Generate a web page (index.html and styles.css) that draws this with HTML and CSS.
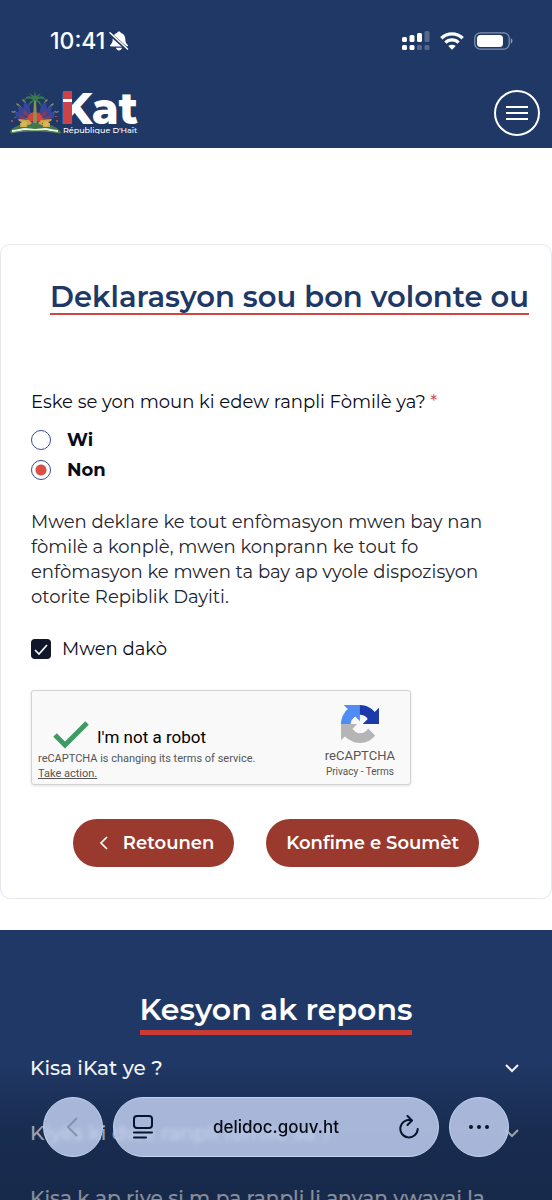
FILE: index.html
```html
<!DOCTYPE html>
<html lang="ht">
<head>
  <meta charset="UTF-8">
  <meta name="viewport" content="width=device-width, initial-scale=1.0">
  <title>iKat - Deklarasyon</title>
  <link rel="stylesheet" href="styles.css">
</head>
<body>
  <div class="screen">
    <header class="header">
      <div class="status-bar">
        <div class="status-left">
          <span class="time">10:41</span>
          <svg class="bell" viewBox="0 0 20 20" width="20" height="20">
            <path fill="#fff" d="M10 .5c1 0 1.800.7 2 1.600 2.700.8 4.300 3.100 4.300 5.900 0 3.600 1 4.700 2.500 6.100.5.500.2 1.500-.8 1.500H2c-1 0-1.300-1-.8-1.500C2.700 12.700 3.700 11.600 3.700 8c0-2.800 1.600-5.100 4.300-5.900C8.200 1.200 9 .5 10 .5zM7 16.800h6c-.2 1.500-1.500 2.600-3 2.600s-2.800-1.100-3-2.600z"/>
            <path stroke="#203866" stroke-width="3.500" d="M0 2l19 17"/>
            <path stroke="#fff" stroke-width="1.500" stroke-linecap="round" d="M1 1.800L18.500 18"/>
          </svg>
        </div>
        <div class="status-right">
          <svg viewBox="0 0 28 20" width="28" height="20" fill="#fff">
            <rect x="0" y="6" width="5" height="5" rx="1.500"/>
            <rect x="7.500" y="4" width="5" height="7" rx="1.500"/>
            <rect x="15" y="2" width="5" height="9" rx="1.500"/>
            <rect x="22.500" y="0" width="5" height="11" rx="1.500" opacity=".25"/>
            <rect x="0" y="14" width="5" height="5" rx="1.500"/>
            <rect x="7.500" y="14" width="5" height="5" rx="1.500"/>
            <rect x="15" y="14" width="5" height="5" rx="1.500" opacity=".25"/>
            <rect x="22.500" y="14" width="5" height="5" rx="1.500" opacity=".25"/>
          </svg>
          <svg viewBox="0 0 24 18" width="24" height="18">
            <path fill="none" stroke="#fff" stroke-width="3.300" d="M1.300 6.300a15.300 15.300 0 0 1 21.400 0M5.400 10.600a9.500 9.500 0 0 1 13.200 0"/>
            <path fill="#fff" d="M12 17.800l-3.700-3.700a5.400 5.400 0 0 1 7.400 0z"/>
          </svg>
          <svg viewBox="0 0 39 18" width="39" height="18">
            <rect x=".8" y=".8" width="34.400" height="16.400" rx="5.500" fill="none" stroke="#fff" stroke-opacity=".45" stroke-width="1.300"/>
            <rect x="3" y="3" width="26" height="12" rx="3.500" fill="#fff"/>
            <path fill="#fff" fill-opacity=".5" d="M36.800 6.300c2.200.8 2.200 4.600 0 5.400z"/>
          </svg>
        </div>
      </div>
      <div class="nav-bar">
        <a class="logo" href="#" aria-label="iKat République D'Haïti">
          <svg viewBox="0 0 130 46" width="130" height="46">
            <!-- flags behind the tree -->
            <g stroke-width="1" fill="none">
              <path stroke="#8a8d8c" d="M25 34L4 21M25 34L8 14M25 34L14 10M25 34L46 21M25 34L42 14M25 34L36 10"/>
            </g>
            <path fill="#34479a" d="M14 12l5 3 2 10-8-3zM8 16l7 3 3 9-9-4zM5 22l7 1 4 6-10-1zM36 12l-5 3-2 10 8-3zM42 16l-7 3-3 9 9-4zM45 22l-7 1-4 6 10-1z"/>
            <path fill="#7d3c5b" d="M14 19l4 4 2 5-7-4zM9 25l6 2 2 4-7-1zM36 19l-4 4-2 5 7-4zM41 25l-6 2-2 4 7-1z"/>
            <path fill="#8c8a5c" d="M13 9l2 2-1 1-2-2zM7 13l2 2-1 1-2-2zM2 21l3 1-1 1-3-1zM37 9l-2 2 1 1 2-2zM43 13l-2 2 1 1 2-2zM48 21l-3 1 1 1 3-1z"/>
            <path fill="#a8474f" d="M1 30h2v2H1zM4 27h2v1H4zM46 30h2v2h-2zM45 26h2v1h-2z"/>
            <!-- drum -->
            <path fill="#d2443c" d="M17 33c-1-7 3-11 8-11s9 4 8 11z"/>
            <path fill="#384a9f" d="M18 31h14l1 4H17z"/>
            <!-- palm tree -->
            <path fill="#8e9151" d="M24 8h2l1 26h-4z"/>
            <path fill="#367a4c" d="M25 1l1 5 5-3-3 4c4-2 7 0 8 4-3-3-6-3-9-1 3 1 4 3 4 6-2-3-4-5-6-5-2 0-4 2-6 5 0-3 1-5 4-6-3-2-6-2-9 1 1-4 4-6 8-4l-3-4 5 3z"/>
            <!-- hill, cannons and ribbon -->
            <path fill="#42774c" d="M3 38c7-4 12-5 22-5s15 1 22 5l5 5c-17-3-37-3-54 0z"/>
            <path fill="#c9a446" d="M8 29l11 1 3 3-3 2-10-4zM42 29l-11 1-3 3 3 2 10-4zM10 33h8l-1 4h-7zM32 33h8v4h-7z"/>
            <circle cx="14" cy="34" r="3" fill="#d7b657"/>
            <circle cx="36" cy="34" r="3" fill="#d7b657"/>
            <path fill="none" stroke="#edf1e6" stroke-width="2" d="M2 41c5 0 9-2 13-2 4 0 6 1 10 1s6-1 10-1c4 0 8 2 13 2"/>
            <path fill="none" stroke="#698f55" stroke-width="1" d="M1 43c15-3 33-3 49 0"/>
            <!-- wordmark -->
            <text class="logo-word" x="50" y="34">Kat</text>
            <path fill="#cb4346" d="M53 1h9v33h-9z"/>
            <path fill="#fff" d="M53 9h9v3h-9z"/>
            <text class="logo-sub" x="53" y="43">République D'Haït</text>
          </svg>
        </a>
        <button class="menu-button" type="button" aria-label="Meni">
          <svg viewBox="0 0 24 16" width="24" height="16">
            <path stroke="#fff" stroke-width="2" d="M1 2h22M1 8h22M1 14h22"/>
          </svg>
        </button>
      </div>
    </header>

    <main>
      <form class="card">
        <h1 class="card-title"><span>Deklarasyon sou bon volonte ou</span></h1>

        <fieldset class="question">
          <legend>Eske se yon moun ki edew ranpli Fòmilè ya? <span class="required">*</span></legend>
          <label class="choice"><input type="radio" name="helped" value="wi">Wi</label>
          <label class="choice"><input type="radio" name="helped" value="non" checked>Non</label>
        </fieldset>

        <p class="statement">Mwen deklare ke tout enfòmasyon mwen bay nan fòmilè a konplè, mwen konprann ke tout fo enfòmasyon ke mwen ta bay ap vyole dispozisyon otorite Repiblik Dayiti.</p>

        <label class="agree"><input type="checkbox" checked>Mwen dakò</label>

        <div class="captcha">
          <div class="captcha-main">
            <div class="captcha-check">
              <svg viewBox="0 0 36 28" width="36" height="28">
                <path fill="none" stroke="#3f9b64" stroke-width="5" d="M2 14l10 10L34 2"/>
              </svg>
              <span>I'm not a robot</span>
            </div>
            <p class="captcha-note">reCAPTCHA is changing its terms of service.<br><a href="#">Take action.</a></p>
          </div>
          <div class="captcha-brand">
            <svg viewBox="0 0 64 64" width="38" height="38">
              <path fill="#1c3aa9" d="M64 31.955l-.033-1.370V4.687l-7.160 7.160C50.948 4.674 42.033.093 32.050.093c-10.400 0-19.622 4.960-25.458 12.640l11.736 11.860a15.550 15.550 0 0 1 4.754-5.334c2.050-1.600 4.952-2.906 8.968-2.906.485 0 .860.057 1.135.163 4.976.393 9.288 3.140 11.828 7.124l-8.307 8.307L64 31.953"/>
              <path fill="#4f8df5" d="M31.862.094l-1.370.033H4.594l7.160 7.160C4.580 13.147 0 22.060 0 32.046c0 10.400 4.960 19.622 12.640 25.458L24.500 45.768a15.550 15.550 0 0 1-5.334-4.754c-1.600-2.050-2.906-4.952-2.906-8.968 0-.485.057-.860.163-1.135.393-4.976 3.140-9.288 7.124-11.828l8.307 8.307L31.860.095"/>
              <path fill="#b5b5b5" d="M.001 32.045l.033 1.370v25.898l7.160-7.160c5.860 7.173 14.774 11.754 24.760 11.754 10.400 0 19.622-4.960 25.458-12.640l-11.736-11.860a15.550 15.550 0 0 1-4.754 5.334c-2.050 1.600-4.952 2.906-8.968 2.906-.485 0-.860-.057-1.135-.163-4.976-.393-9.288-3.140-11.828-7.124l8.307-8.307c-10.522.040-22.400.066-27.295-.005"/>
            </svg>
            <span class="captcha-name">reCAPTCHA</span>
            <span class="captcha-links"><a href="#">Privacy</a> - <a href="#">Terms</a></span>
          </div>
        </div>

        <div class="actions">
          <button class="button" type="button">
            <svg viewBox="0 0 20 20" width="20" height="20">
              <path fill="none" stroke="#fff" stroke-width="1.700" d="M14 4l-6 6 6 6"/>
            </svg>
            Retounen
          </button>
          <button class="button" type="submit">Konfime e Soumèt</button>
        </div>
      </form>
    </main>

    <section class="faq">
      <h2 class="faq-title"><span>Kesyon ak repons</span></h2>
      <button class="faq-item" type="button">
        Kisa iKat ye ?
        <svg viewBox="0 0 14 14" width="14" height="14"><path fill="none" stroke="#fff" stroke-width="2" d="M1 4l6 6 6-6"/></svg>
      </button>
      <button class="faq-item" type="button">
        Kiyès ki dwe ranpli fòmilè sa ?
        <svg viewBox="0 0 14 14" width="14" height="14"><path fill="none" stroke="#fff" stroke-width="2" d="M1 4l6 6 6-6"/></svg>
      </button>
      <button class="faq-item" type="button">Kisa k ap rive si m pa ranpli li anvan vwayaj la</button>
    </section>

    <!-- floating browser controls -->
    <div class="browser-bar">
      <button class="glass round" type="button" aria-label="Back">
        <svg viewBox="0 0 20 20" width="20" height="20"><path fill="none" stroke="#8592ac" stroke-width="2" d="M14 1L5 10l9 9"/></svg>
      </button>
      <div class="glass address">
        <button class="icon-button" type="button" aria-label="Page menu">
          <svg viewBox="0 0 20 24" width="20" height="24" fill="none" stroke="#08132d" stroke-width="2" stroke-linecap="round">
            <rect x="1" y="1" width="18" height="12" rx="3"/>
            <path d="M1 17.500h18M1 22.500h12"/>
          </svg>
        </button>
        <span class="host">delidoc.gouv.ht</span>
        <button class="icon-button" type="button" aria-label="Reload">
          <svg viewBox="0 0 20 24" width="20" height="24" fill="none" stroke="#08132d" stroke-width="2" stroke-linecap="round" stroke-linejoin="round">
            <path d="M12.500 5.400A8.700 8.700 0 1 0 18.700 14M8.500 1l4.500 4.500L8.500 10"/>
          </svg>
        </button>
      </div>
      <button class="glass round" type="button" aria-label="More">
        <svg viewBox="0 0 20 4" width="20" height="4" fill="#08132d"><circle cx="2" cy="2" r="2"/><circle cx="10" cy="2" r="2"/><circle cx="18" cy="2" r="2"/></svg>
      </button>
    </div>
  </div>
</body>
</html>
```

FILE: styles.css
```css
* {
  box-sizing: border-box;
}

body {
  margin: 0;
  font-family: Montserrat, Inter, sans-serif;
  font-size: 18px;
  color: #080b18;
  background: #fff;
}

button {
  font-family: inherit;
  color: inherit;
  border: 0;
  background: none;
  cursor: pointer;
}

svg {
  display: block;
  flex: none;
}

.screen {
  position: relative;
  height: 100vh;
  overflow: hidden;
}

/* Header */
.header {
  background: #203866;
  color: #fff;
}

.status-bar {
  display: flex;
  justify-content: space-between;
  align-items: center;
  height: 82px;
  padding: 0 39px 0 50px;
}

.status-left {
  display: flex;
  align-items: center;
  gap: 4px;
}

.status-right {
  display: flex;
  align-items: center;
  gap: 10px;
}

.time {
  font-family: Inter, sans-serif;
  font-size: 23px;
  font-weight: 500;
}

.nav-bar {
  display: flex;
  justify-content: space-between;
  align-items: center;
  height: 66px;
  padding: 0 12px 4px 10px;
}

.logo-word {
  font-family: Montserrat, Inter, sans-serif;
  font-size: 43px;
  font-weight: 800;
  fill: #fff;
}

.logo-sub {
  font-family: Montserrat, Inter, sans-serif;
  font-size: 8px;
  font-weight: 500;
  fill: #fff;
}

.menu-button {
  display: flex;
  justify-content: center;
  align-items: center;
  width: 46px;
  height: 46px;
  padding: 0;
  border: 2px solid #fff;
  border-radius: 50%;
}

/* Form card */
.card {
  margin: 96px 0 31px;
  padding: 36px 30px 31px;
  border: 1px solid #e4e7ec;
  border-radius: 10px;
}

.card-title {
  margin: 0 -8px 74px 0;
  font-size: 29px;
  line-height: 32px;
  font-weight: 600;
  text-align: right;
  color: #203866;
}

.card-title span {
  display: inline-block;
  border-bottom: 2px solid #cf4640;
}

.question {
  margin: 0;
  padding: 0;
  border: 0;
}

.question legend {
  padding: 0;
  margin-bottom: 10px;
  line-height: 26px;
}

.required {
  color: #d9463f;
}

.choice {
  display: flex;
  align-items: center;
  gap: 16px;
  height: 30px;
  font-weight: 700;
}

.choice input {
  appearance: none;
  width: 20px;
  height: 20px;
  margin: 0;
  border: 1px solid #3a4a8c;
  border-radius: 50%;
}

.choice input:checked {
  background: radial-gradient(circle, #dc4f45 0 5px, #fff 6px);
}

.statement {
  margin: 25px 0 26px;
  line-height: 25px;
  color: #23252f;
}

.agree {
  display: flex;
  align-items: center;
  gap: 11px;
  line-height: 26px;
}

.agree input {
  appearance: none;
  width: 20px;
  height: 20px;
  margin: 0;
  border-radius: 4px;
  background: #11162a url("data:image/svg+xml,%3Csvg xmlns='http://www.w3.org/2000/svg' viewBox='0 0 20 20'%3E%3Cpath fill='none' stroke='white' stroke-width='1.600' d='M4 11l4 4 8-9'/%3E%3C/svg%3E");
}

/* Captcha */
.captcha {
  display: flex;
  justify-content: space-between;
  width: 380px;
  max-width: 100%;
  height: 95px;
  margin-top: 28px;
  border: 1px solid #d3d3d3;
  border-radius: 3px;
  background: #f9f9f9;
  box-shadow: 0 1px 3px rgba(0, 0, 0, 0.12);
  font-family: Roboto, sans-serif;
  color: #555;
}

.captcha-main {
  padding: 28px 0 0 6px;
}

.captcha-check {
  display: flex;
  align-items: center;
  gap: 8px;
  height: 32px;
  padding-left: 15px;
  font-size: 17px;
  color: #000;
}

.captcha-check span {
  padding-top: 4px;
}

.captcha-note {
  margin: 0;
  font-size: 11px;
  line-height: 15px;
}

.captcha-note a {
  color: inherit;
}

.captcha-brand {
  display: flex;
  flex-direction: column;
  align-items: center;
  padding: 14px 15px 0 0;
}

.captcha-name {
  margin-top: 5px;
  font-size: 13px;
  line-height: 16px;
}

.captcha-links {
  font-size: 10px;
  line-height: 16px;
}

.captcha-links a {
  color: inherit;
  text-decoration: none;
}

/* Buttons */
.actions {
  display: flex;
  justify-content: center;
  gap: 32px;
  margin-top: 34px;
}

.button {
  display: flex;
  align-items: center;
  gap: 10px;
  height: 48px;
  padding: 0 20px;
  border-radius: 24px;
  background: #9a392d;
  color: #fff;
  font-size: 18px;
  font-weight: 600;
}

/* FAQ */
.faq {
  padding: 60px 30px 0;
  background: #203866;
  color: #fff;
}

.faq-title {
  margin: 0;
  font-size: 30px;
  line-height: 40px;
  font-weight: 600;
  text-align: center;
}

.faq-title span {
  display: inline-block;
  border-bottom: 5px solid #c93c36;
}

.faq-item {
  display: flex;
  justify-content: space-between;
  align-items: center;
  width: 100%;
  height: 65px;
  padding: 0 3px 0 0;
  font-size: 20px;
  font-weight: 500;
  text-align: left;
  white-space: nowrap;
}

/* Browser controls over the page */
.browser-bar {
  position: absolute;
  right: 0;
  bottom: 0;
  left: 0;
  display: flex;
  gap: 10px;
  padding: 37px 43px 43px;
  background: linear-gradient(rgba(14, 27, 48, 0), rgba(14, 27, 48, 0.4) 50%, rgba(14, 27, 48, 0.5));
}

.glass {
  display: flex;
  align-items: center;
  height: 60px;
  border: 1px solid #c3d4f1;
  border-radius: 30px;
  background: rgba(204, 218, 250, 0.8);
  backdrop-filter: blur(2px);
}

.round {
  flex: none;
  justify-content: center;
  width: 60px;
  padding: 0;
}

.address {
  flex: 1;
  justify-content: space-between;
  padding: 0 19px;
}

.icon-button {
  padding: 0;
}

.host {
  font-family: Inter, sans-serif;
  font-size: 17px;
  font-weight: 500;
  color: #060a14;
}
```
